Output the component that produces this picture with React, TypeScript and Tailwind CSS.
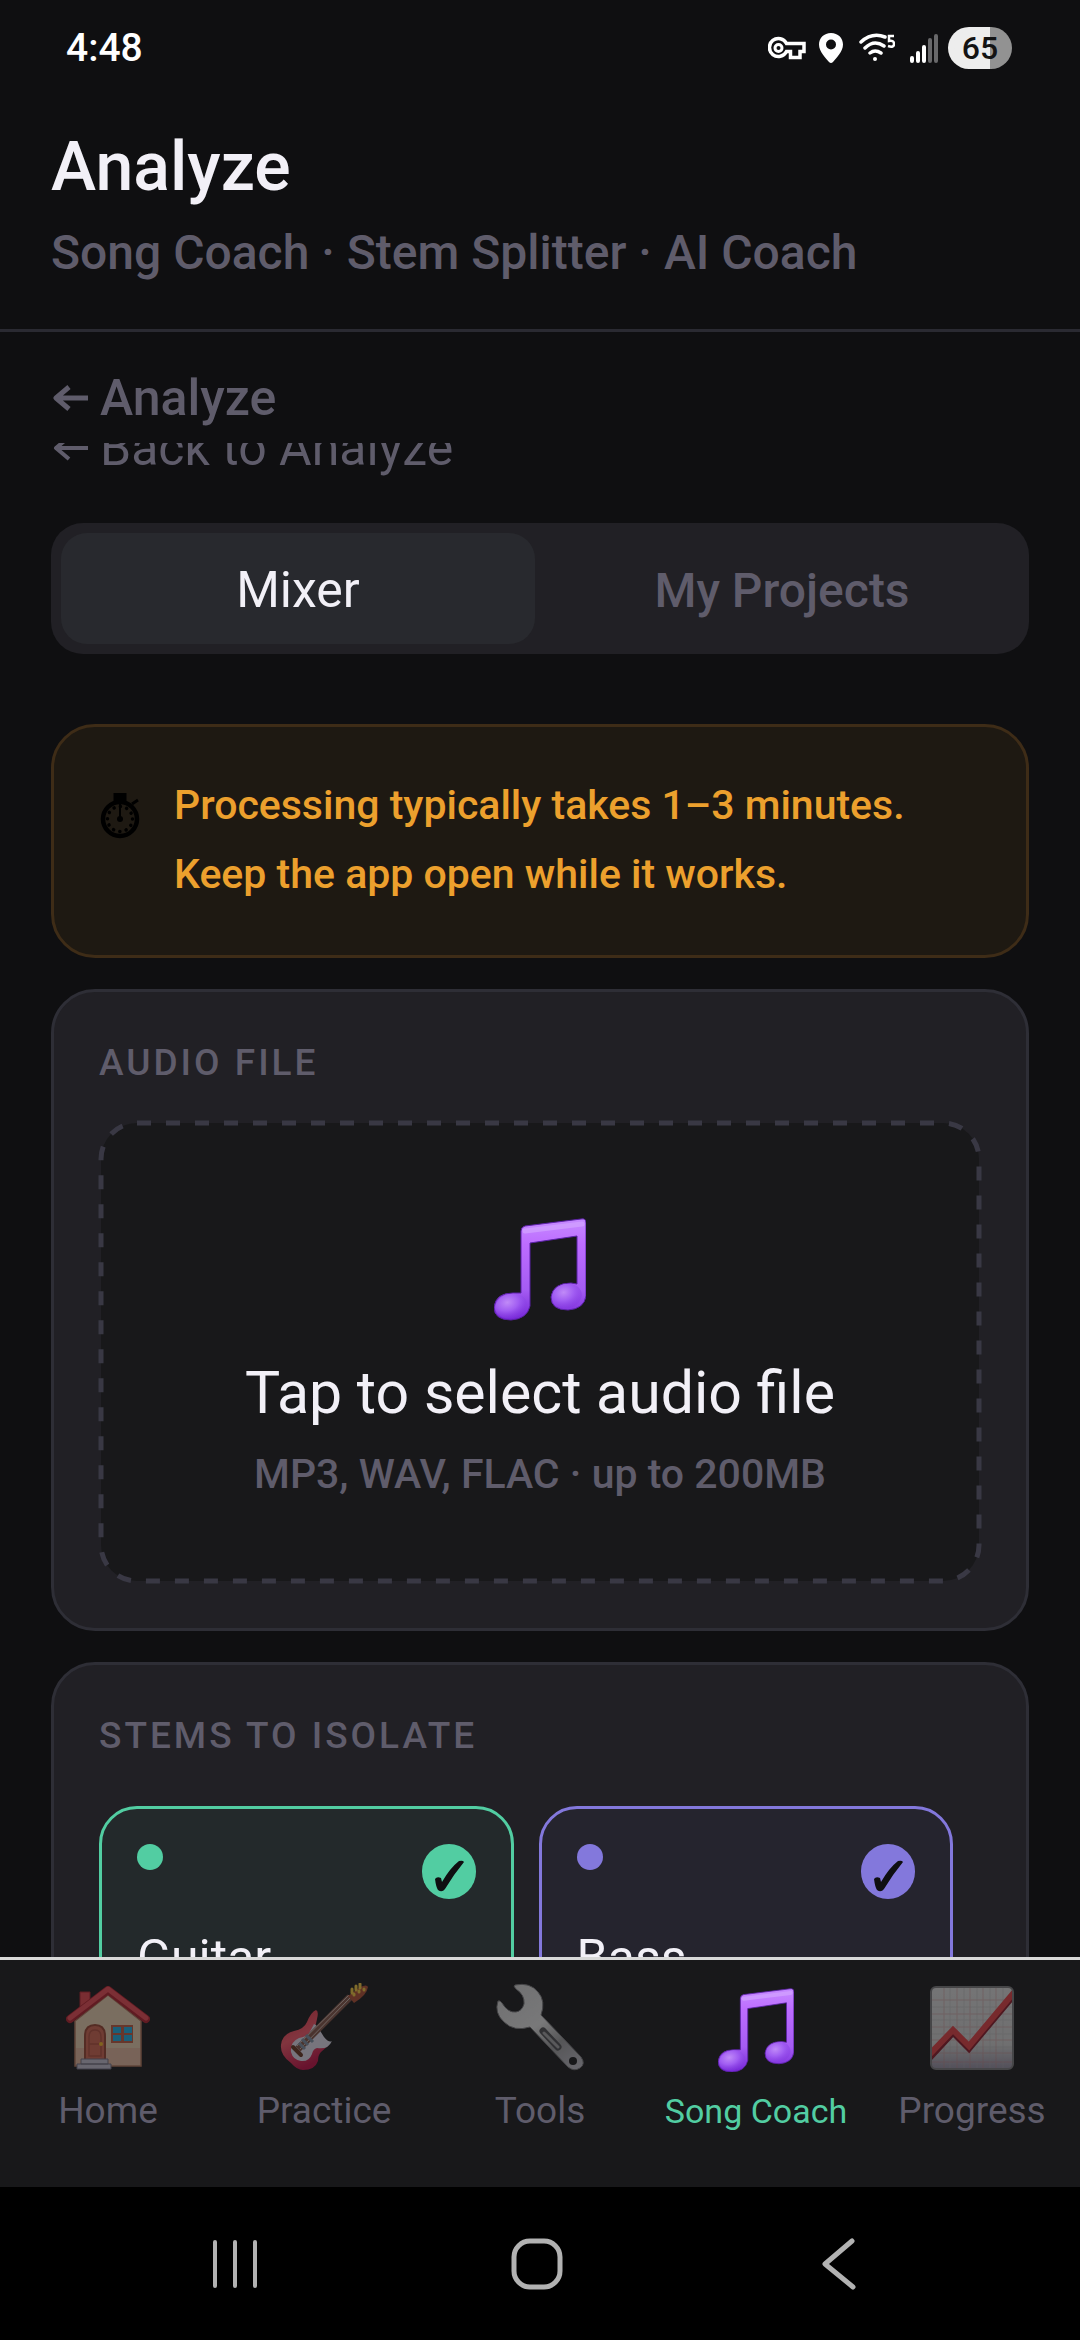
import React, { useState } from 'react';

const ArrowLeft: React.FC<{ strokeWidth: number }> = ({ strokeWidth }) => (
    <svg width="36" height="28" viewBox="0 0 36 28" fill="none" stroke="currentColor" strokeWidth={strokeWidth} aria-hidden="true">
        <path d="M35 14H3M16 3L3 14l13 11" strokeLinejoin="round" />
    </svg>
);

const StopwatchIcon = () => (
    <svg width="40" height="46" viewBox="0 0 40 46" aria-hidden="true">
        <circle cx="20" cy="26" r="17" fill="none" stroke="#000" strokeWidth="4.500" />
        <circle cx="20" cy="26" r="12.500" fill="none" stroke="#000" strokeWidth="3.500" strokeDasharray="0.1 6.445" strokeLinecap="round" />
        <path d="M15 1h10v6H15zM32 11l6-4" stroke="#000" strokeWidth="3" />
        <path d="M20 26V8" stroke="#000" strokeWidth="2" />
        <circle cx="20" cy="26" r="3" />
    </svg>
);

const NotesIcon: React.FC<{ id: string; className: string }> = ({ id, className }) => (
    <svg className={className} viewBox="0 0 92 102" aria-hidden="true">
        <defs>
            <linearGradient id={`${id}-body`} x1="0" y1="0" x2="0" y2="1">
                <stop offset="0" stopColor="#c68bff" />
                <stop offset="0.25" stopColor="#bd6cff" />
                <stop offset="0.7" stopColor="#a55cf3" />
                <stop offset="1" stopColor="#7526d6" />
            </linearGradient>
            <radialGradient id={`${id}-head`} cx="0.42" cy="0.32" r="0.7">
                <stop offset="0" stopColor="#c08af8" />
                <stop offset="0.5" stopColor="#a15df2" />
                <stop offset="1" stopColor="#8238e0" stopOpacity="0.3" />
            </radialGradient>
        </defs>
        <path
            d="M27 13Q27 9 31 8L87 1Q92 0 92 5V78Q90 91 74 92Q57 92 57 79Q59 65 77 65L83 66V18L36 25V88Q33 101 17 102Q0 102 0 89Q2 75 19 75L27 75Z"
            fill={`url(#${id}-body)`}
            stroke="#5b21a8"
            strokeWidth="1"
        />
        <ellipse cx="17" cy="88" rx="16" ry="12" transform="rotate(-14 17 88)" fill={`url(#${id}-head)`} />
        <ellipse cx="73" cy="78" rx="15" ry="12" transform="rotate(-14 73 78)" fill={`url(#${id}-head)`} />
        <path d="M31 13L88 6" stroke="#d3a4ff" strokeWidth="5" strokeLinecap="round" opacity="0.7" />
    </svg>
);

const HouseIcon = () => (
    <svg className="h-[88px] w-[88px] opacity-50" viewBox="0 0 88 88" aria-hidden="true">
        <path d="M16 9h10v20H16z" fill="#d9434a" stroke="#a3212c" />
        <path d="M11 38L44 12l33 26v45H11z" fill="#dcc3a5" stroke="#a66f55" strokeWidth="1.5" />
        <path d="M12 65h64v17H12z" fill="#d69c8a" opacity="0.55" />
        <path d="M6 36L44 7l38 29" fill="none" stroke="#a81e2b" strokeWidth="8" strokeLinecap="round" strokeLinejoin="round" />
        <path d="M6 35L44 6l38 29" fill="none" stroke="#de4650" strokeWidth="5" strokeLinecap="round" strokeLinejoin="round" />
        <path d="M21 77V53q0-11 10-11t10 11v24z" fill="#c5614d" stroke="#91402f" strokeWidth="2" />
        <path d="M25 73V54q0-7 6-7t6 7v19zM25 61h12" fill="none" stroke="#a94b3b" strokeWidth="1.5" />
        <circle cx="37" cy="61" r="2" fill="#e8ad24" />
        <path d="M47 42h22v18H47z" fill="#b5563f" />
        <path d="M49 44h8v6h-8zM60 44h8v6h-8zM49 52h8v6h-8zM60 52h8v6h-8z" fill="#1ea6d8" />
        <path d="M17 76h27v5H17zM13 81h34v5H13z" fill="#b7b3c4" stroke="#6f6a7a" />
    </svg>
);

const GuitarIcon = () => (
    <svg className="h-[88px] w-[88px] opacity-50" viewBox="0 0 88 88" aria-hidden="true">
        <defs>
            <linearGradient id="guitar-body" x1="0" y1="0" x2="0.4" y2="1">
                <stop offset="0" stopColor="#d62a3a" />
                <stop offset="0.5" stopColor="#ea5364" />
                <stop offset="1" stopColor="#b70f42" />
            </linearGradient>
        </defs>
        <path d="M36 27q3 1 1 9l-2 9 14 17-8 7q-3 3-3 9-3 9-15 9-6 0-12-7Q0 72 1 62q1-11 13-14 10-2 13-9 4-10 9-12z" fill="url(#guitar-body)" />
        <path d="M34 41q3 1 5 5l5 8q5 6 8 4-4 9-15 7-4 1-5 6-3 8-11 7-8-1-10-9-1-10 8-14 7-1 10-5 2-3 5-9z" fill="#d5d2e0" />
        <path d="M18 66L70 14" stroke="#7d5044" strokeWidth="7" />
        <path d="M20 66L70 15M17 63L69 12" stroke="#c4b1a8" strokeWidth="1" />
        <path d="M22 56l6 6M19 60l6 6M26 52l7 7" stroke="#78899b" strokeWidth="3" />
        <path d="M13 64l8 8" stroke="#63321f" strokeWidth="4" strokeLinecap="round" />
        <path d="M68 13l12-9q7-3 8 0-1 8-14 16z" fill="#a54a30" />
        <path d="M72 6v4M76 3v4M80 1v4M74 11v1M79 8v1M84 6v1" stroke="#e5bd3c" strokeWidth="3" strokeLinecap="round" />
    </svg>
);

const WrenchIcon = () => (
    <svg className="h-[88px] w-[88px] opacity-50" viewBox="0 0 88 88" aria-hidden="true">
        <defs>
            <linearGradient id="wrench-metal" x1="0.2" y1="0" x2="0.9" y2="1">
                <stop offset="0" stopColor="#c9c9c9" />
                <stop offset="0.45" stopColor="#d8d8d8" />
                <stop offset="0.7" stopColor="#929294" />
                <stop offset="1" stopColor="#b4b2bb" />
            </linearGradient>
        </defs>
        <path
            d="M19 2Q34-1 42 9q8 9 3 23L85 74q5 7-1 11-6 4-12-1L34 44Q18 49 8 39-2 30 2 18q2-1 4 2 6 10 14 9 6-1 8-8 1-9-8-15-3-3-1-4z"
            fill="url(#wrench-metal)"
            stroke="#707073"
            strokeWidth="1"
        />
        <path d="M47 48l15 16" stroke="#4b4b4e" strokeWidth="7" strokeLinecap="round" />
        <path d="M48 50l14 14" stroke="#9a9a9c" strokeWidth="3" strokeLinecap="round" />
        <circle cx="77" cy="78" r="4" fill="#18181a" />
    </svg>
);

const ChartIcon = () => (
    <svg className="h-[88px] w-[88px] opacity-50" viewBox="0 0 88 88" aria-hidden="true">
        <defs>
            <linearGradient id="chart-paper" x1="0" y1="0" x2="0" y2="1">
                <stop offset="0" stopColor="#d0d0d0" />
                <stop offset="0.7" stopColor="#c6c6c6" />
                <stop offset="1" stopColor="#8d8799" />
            </linearGradient>
            <clipPath id="chart-clip">
                <rect x="3" y="4" width="82" height="82" rx="5" />
            </clipPath>
        </defs>
        <g clipPath="url(#chart-clip)">
            <rect x="3" y="4" width="82" height="82" fill="url(#chart-paper)" />
            <path d="M3 17h82M3 31h82M3 44h82M3 57h82M3 70h82M3 79h82M16 4v82M29 4v82M42 4v82M55 4v82M68 4v82" stroke="#bd7777" strokeWidth="1" opacity="0.4" />
            <path d="M3 24h82M3 37h82M3 51h82M3 64h82M22 4v82M36 4v82M49 4v82M62 4v82M75 4v82" stroke="#a3a3a3" strokeWidth="1" opacity="0.4" />
            <path d="M0 76l25-27 16 16L88 9" fill="none" stroke="#841827" strokeWidth="7" />
            <path d="M0 73l25-26 16 16L88 7" fill="none" stroke="#d63c40" strokeWidth="6" />
        </g>
        <rect x="3" y="4" width="82" height="82" rx="5" fill="none" stroke="#747476" strokeWidth="2" />
    </svg>
);

const StatusBar = () => (
    <div className="flex h-[95px] items-center justify-between pr-[68px] pl-[66px]">
        <span className="text-[39px] leading-[48px] font-medium text-white">4:48</span>
        <div className="flex items-center">
            <svg width="38" height="24" viewBox="0 0 38 24" fill="none" stroke="#fff" strokeWidth="3.5" aria-hidden="true">
                <path d="M18.500 7.500H36v8h-4v6h-9.500v-6h-4A9 9 0 1 1 18.500 7.500z" />
                <circle cx="10.500" cy="12" r="3.500" strokeWidth="3" />
            </svg>
            <svg className="ml-3" width="26" height="32" viewBox="0 0 26 32" aria-hidden="true">
                <path fillRule="evenodd" d="M13 1C6 1 1 6 1 12.500 1 20 8 26 11 30q2 2 4 0c3-4 10-10 10-17.500C25 6 20 1 13 1zm0 6.500a5 5 0 1 1 0 10 5 5 0 0 1 0-10z" fill="#fff" />
            </svg>
            <svg className="ml-[15px]" width="36" height="32" viewBox="0 0 36 32" fill="none" stroke="#fff" strokeWidth="3.5" aria-hidden="true">
                <path d="M2 10Q13 0 26 5M6 16Q15 7 25 14M11 21q5-4 11 0" strokeLinecap="round" />
                <circle cx="16" cy="27" r="2" fill="#fff" stroke="none" />
                <path d="M35 4h-5v5q5-1 5 3t-6 2" strokeWidth="2.5" />
            </svg>
            <svg className="ml-[13px]" width="30" height="32" viewBox="0 0 30 32" strokeWidth="4" strokeLinecap="round" aria-hidden="true">
                <path d="M4 26v3M10 21v8M16 15v14" stroke="#fff" />
                <path d="M22 8v21M28 4v25" stroke="#68686a" />
            </svg>
            <div className="ml-[10px] flex h-[42px] w-16 items-center justify-center rounded-full bg-linear-to-r from-[#ededed] from-66% to-[#929292] to-66% text-[32px] leading-[42px] font-medium text-[#131313]">
                65
            </div>
        </div>
    </div>
);

interface StemCardProps {
    name: string;
    cardClass: string;
    dotClass: string;
}

const StemCard: React.FC<StemCardProps> = ({ name, cardClass, dotClass }) => {
    const [selected, setSelected] = useState(true);

    return (
        <button
            type="button"
            aria-pressed={selected}
            onClick={() => setSelected(!selected)}
            className={`w-[47%] rounded-[38px] border-3 p-[35px] text-left ${cardClass}`}
        >
            <div className="flex items-start justify-between">
                <span className={`h-[26px] w-[26px] rounded-full ${dotClass}`} />
                <span className={`flex h-[55px] w-[54px] items-center justify-center rounded-full ${dotClass}`}>
                    {selected && (
                        <svg width="54" height="55" viewBox="0 0 54 55" aria-hidden="true">
                            <path d="M13 35q2-3 6-1l1 4Q28 24 37 17q4-1 5 1Q32 30 23 45q-3 4-7 1-2-3-3-11z" fill="#0f0f11" />
                        </svg>
                    )}
                </span>
            </div>
            <p className="mt-[27px] text-[50px] leading-[64px] text-[#f2f0f7]">{name}</p>
        </button>
    );
};

const navItems = [
    { label: 'Home', icon: <HouseIcon /> },
    { label: 'Practice', icon: <GuitarIcon /> },
    { label: 'Tools', icon: <WrenchIcon /> },
    { label: 'Song Coach', icon: <NotesIcon id="nav-notes" className="mt-[5px] mb-[-1px] h-[84px] w-[76px]" /> },
    { label: 'Progress', icon: <ChartIcon /> }
];

export default function App() {
    const [tab, setTab] = useState('Mixer');
    const [page, setPage] = useState('Song Coach');

    return (
        <div className="flex h-screen flex-col overflow-hidden bg-[#0f0f11] font-['Roboto','Noto_Sans',sans-serif] text-[#f2f0f7]">
            <StatusBar />

            <header className="border-b-3 border-[#2a2a32] px-[51px] pt-8 pb-[44px]">
                <h1 className="text-[68px] leading-[80px] font-medium">Analyze</h1>
                <p className="mt-[14px] text-[48px] leading-[64px] font-medium text-[#5f5c6b]">Song Coach · Stem Splitter · AI Coach</p>
            </header>

            <div className="px-[53px] pt-[34px] pb-[13px]">
                <button type="button" className="flex items-center gap-[11px] text-[50px] leading-[64px] font-medium text-[#5f5c6b]">
                    <ArrowLeft strokeWidth={5} />
                    Analyze
                </button>
            </div>

            <main className="min-h-0 flex-1 overflow-hidden px-[51px]">
                <button type="button" className="-mt-[25px] ml-0.5 flex items-center gap-[11px] text-[50px] leading-[60px] text-[#5f5c6b]">
                    <ArrowLeft strokeWidth={4} />
                    Back to Analyze
                </button>

                <div role="tablist" className="mt-[45px] flex gap-[10px] rounded-[32px] bg-[#212025] p-[10px]">
                    {['Mixer', 'My Projects'].map(name => (
                        <button
                            key={name}
                            type="button"
                            role="tab"
                            aria-selected={tab === name}
                            onClick={() => setTab(name)}
                            className={`flex-1 rounded-[26px] pt-[25px] pb-[21px] leading-[65px] ${tab === name ? 'bg-[#28292e] text-[50px] text-[#f2f0f7]' : 'text-[48px] font-medium text-[#5f5c6b]'}`}
                        >
                            {name}
                        </button>
                    ))}
                </div>

                <section className="mt-[70px] flex items-start rounded-[44px] border-3 border-[#3e2c17] bg-[#1e1912] px-[46px] pt-[44px] pb-[46px]">
                    <div className="mt-[22px] mr-[34px]">
                        <StopwatchIcon />
                    </div>
                    <p className="flex-1 text-[41px] leading-[69px] font-medium text-[#eca02d]">
                        Processing typically takes 1–3 minutes.
                        <br />
                        Keep the app open while it works.
                    </p>
                </section>

                <section className="mt-[31px] rounded-[44px] border-3 border-[#2e2e36] bg-[#212025] px-[45px] pt-[47px] pb-[45px]">
                    <h2 className="text-[37px] leading-[48px] font-medium tracking-[3px] text-[#5f5c6b]">AUDIO FILE</h2>
                    <button type="button" className="relative mt-[34px] flex w-full flex-col items-center rounded-[38px] pt-24 pb-[79px]">
                        <svg className="absolute inset-0 h-full w-full overflow-visible p-[2px]" aria-hidden="true">
                            <rect width="100%" height="100%" rx="36" fill="#18181a" stroke="#393844" strokeWidth="5" strokeDasharray="14 15" />
                        </svg>
                        <NotesIcon id="drop-notes" className="relative h-[104px] w-[92px]" />
                        <span className="relative mt-9 text-[59px] leading-[72px]">Tap to select audio file</span>
                        <span className="relative mt-[15px] text-[41px] leading-[60px] font-medium text-[#5f5c6b]">MP3, WAV, FLAC · up to 200MB</span>
                    </button>
                </section>

                <section className="mt-[31px] rounded-[44px] border-3 border-[#2e2e36] bg-[#212025] px-[45px] pt-[47px] pb-[45px]">
                    <h2 className="text-[37px] leading-[48px] font-medium tracking-[3px] text-[#5f5c6b]">STEMS TO ISOLATE</h2>
                    <div className="mt-[46px] flex flex-wrap gap-[25px]">
                        <StemCard name="Guitar" cardClass="border-[#52cda2] bg-[#23292b]" dotClass="bg-[#52cda2]" />
                        <StemCard name="Bass" cardClass="border-[#8378dc] bg-[#25242e]" dotClass="bg-[#8378dc]" />
                    </div>
                </section>
            </main>

            <nav className="grid grid-cols-5 border-t-3 border-[#d8d8d8] bg-[#18181a] pt-[23px] pb-[52px]">
                {navItems.map(item => (
                    <button
                        key={item.label}
                        type="button"
                        onClick={() => setPage(item.label)}
                        className={`flex flex-col items-center gap-4 leading-[48px] whitespace-nowrap ${page === item.label ? 'text-[34px] text-[#52cda2]' : 'text-[37px] text-[#5f5c6b]'}`}
                    >
                        {item.icon}
                        {item.label}
                    </button>
                ))}
            </nav>

            <div className="grid h-[153px] grid-cols-3 items-center justify-items-center bg-black pr-[90px] pl-[84px]">
                <button type="button" aria-label="Recent apps">
                    <svg width="52" height="56" viewBox="0 0 52 56" stroke="#b2b2b2" strokeWidth="4" strokeLinecap="round">
                        <path d="M6 6v44M26 6v44M46 6v44" />
                    </svg>
                </button>
                <button type="button" aria-label="Home screen">
                    <svg width="56" height="56" viewBox="0 0 56 56" fill="none" stroke="#b2b2b2" strokeWidth="5">
                        <rect x="5" y="5" width="46" height="46" rx="16" />
                    </svg>
                </button>
                <button type="button" aria-label="Back">
                    <svg width="40" height="56" viewBox="0 0 40 56" fill="none" stroke="#b2b2b2" strokeWidth="5" strokeLinecap="round" strokeLinejoin="round">
                        <path d="M33 5L6 28l28 23" />
                    </svg>
                </button>
            </div>
        </div>
    );
}
